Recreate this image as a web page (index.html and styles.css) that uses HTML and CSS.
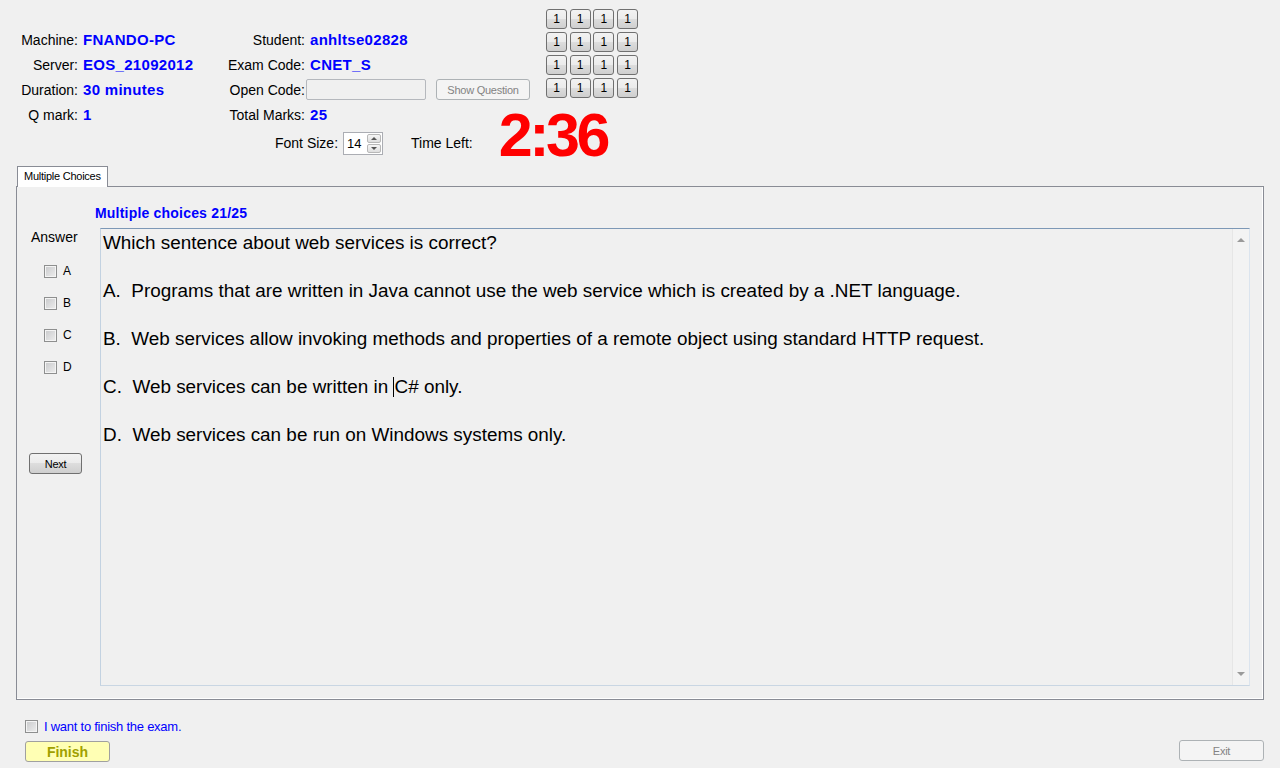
FILE: index.html
```html
<!DOCTYPE html>
<html>
<head>
<meta charset="utf-8">
<title>Exam</title>
<link rel="stylesheet" href="styles.css">
</head>
<body>
<div class="app">
  <header class="top">
    <div class="info">
      <div class="grid">
        <span class="lbl">Machine:</span><span class="val">FNANDO-PC</span>
        <span class="lbl">Student:</span><span class="val">anhltse02828</span>
        <span class="lbl">Server:</span><span class="val">EOS_21092012</span>
        <span class="lbl">Exam Code:</span><span class="val">CNET_S</span>
        <span class="lbl">Duration:</span><span class="val">30 minutes</span>
        <span class="lbl">Open Code:</span>
        <span class="open"><span class="input"></span><span class="btn disabled show">Show Question</span></span>
        <span class="lbl">Q mark:</span><span class="val">1</span>
        <span class="lbl">Total Marks:</span><span class="val">25</span>
      </div>
      <div class="fontrow">
        <span class="lbl2">Font Size:</span>
        <span class="spin">
          <span class="spinval">14</span>
          <span class="spinbtns"><span class="sb"><span class="tri up"></span></span><span class="sb"><span class="tri down"></span></span></span>
        </span>
        <span class="lbl2 timelbl">Time Left:</span>
        <span class="timer">2:36</span>
      </div>
    </div>
    <div class="qgrid">
      <span class="qb">1</span><span class="qb">1</span><span class="qb">1</span><span class="qb">1</span>
      <span class="qb">1</span><span class="qb">1</span><span class="qb">1</span><span class="qb">1</span>
      <span class="qb">1</span><span class="qb">1</span><span class="qb">1</span><span class="qb">1</span>
      <span class="qb">1</span><span class="qb">1</span><span class="qb">1</span><span class="qb">1</span>
    </div>
  </header>

  <section class="tabs">
    <div class="tabstrip"><span class="tab">Multiple Choices</span></div>
    <div class="panel">
      <div class="qtitle">Multiple choices 21/25</div>
      <div class="qbody">
        <div class="answers">
          <div class="anslbl">Answer</div>
          <label class="opt"><span class="cb"></span><span>A</span></label>
          <label class="opt"><span class="cb"></span><span>B</span></label>
          <label class="opt"><span class="cb"></span><span>C</span></label>
          <label class="opt"><span class="cb"></span><span>D</span></label>
          <span class="btn next">Next</span>
        </div>
        <div class="textbox">
          <div class="qtext">
            <p>Which sentence about web services is correct?</p>
            <p>A.  Programs that are written in Java cannot use the web service which is created by a .NET language.</p>
            <p>B.  Web services allow invoking methods and properties of a remote object using standard HTTP request.</p>
            <p>C.  Web services can be written in <span class="caret"></span>C# only.</p>
            <p>D.  Web services can be run on Windows systems only.</p>
          </div>
          <div class="vscroll">
            <span class="tri sup"></span>
            <span class="tri sdown"></span>
          </div>
        </div>
      </div>
    </div>
  </section>

  <footer class="bottom">
    <div class="finishcol">
      <label class="finishchk"><span class="cb"></span><span class="finishtxt">I want to finish the exam.</span></label>
      <span class="btn finish">Finish</span>
    </div>
    <span class="btn disabled exit">Exit</span>
  </footer>
</div>
</body>
</html>
```
FILE: styles.css
```css
* { box-sizing: border-box; }
html, body { margin: 0; padding: 0; }
body {
  width: 1280px;
  height: 768px;
  overflow: hidden;
  background: #f0f0f0;
  font-family: "Liberation Sans", Arial, sans-serif;
  font-size: 14px;
  color: #000;
}
.app { width: 1280px; height: 768px; }

/* header */
.top { display: flex; align-items: flex-start; height: 157px; }
.info { width: 530px; flex-shrink: 0; padding-top: 27px; }
.grid {
  display: grid;
  grid-template-columns: 83px 142px 85px 1fr;
  grid-auto-rows: 25px;
  align-items: center;
}
.lbl { text-align: right; padding-right: 5px; white-space: nowrap; }
.val { color: #0000ff; font-weight: bold; font-size: 15px; letter-spacing: 0.3px; white-space: nowrap; }
.open { display: flex; align-items: center; margin-left: -4px; }
.input {
  width: 120px; height: 21px;
  flex-shrink: 0;
  border: 1px solid #b5b8bd;
  border-radius: 2px;
  background: #f0f0f0;
}
.btn {
  display: inline-flex; align-items: center; justify-content: center;
  flex-shrink: 0;
  height: 21px;
  border: 1px solid #707070;
  border-radius: 3px;
  background: linear-gradient(#f2f2f2 0%, #ebebeb 50%, #dddddd 50%, #cfcfcf 100%);
  font-size: 11px;
  letter-spacing: -0.25px;
  color: #000;
}
.btn.disabled {
  border-color: #adb2b5;
  background: #f4f4f4;
  color: #838383;
}
.show { width: 94px; margin-left: 10px; }

.fontrow {
  display: flex; align-items: center;
  height: 28px; margin-top: 2px;
  padding-left: 275px;
}
.fontrow > * { flex-shrink: 0; }
.lbl2 { white-space: nowrap; }
.spin {
  display: flex; align-items: stretch;
  width: 40px; height: 23px;
  margin-left: 5px;
  border: 1px solid #abadb3;
  background: #fff;
}
.spinval { flex: 1; font-size: 13px; padding-left: 3px; line-height: 21px; }
.spinbtns { width: 16px; display: flex; flex-direction: column; padding: 1px; gap: 1px; }
.sb {
  flex: 1;
  display: flex; align-items: center; justify-content: center;
  border: 1px solid #b8b8b8; border-radius: 2px;
  background: linear-gradient(#f6f6f6, #dedede);
}
.tri { width: 0; height: 0; display: block; }
.tri.up { border-left: 3px solid transparent; border-right: 3px solid transparent; border-bottom: 3px solid #555; }
.tri.down { border-left: 3px solid transparent; border-right: 3px solid transparent; border-top: 3px solid #555; }
.timelbl { margin-left: 28px; }
.timer {
  margin-left: 26px;
  margin-top: -16px;
  font-size: 61px;
  line-height: 44px;
  font-weight: bold;
  color: #ff0000;
  letter-spacing: -3.5px;
}

.qgrid {
  margin-top: 9px;
  margin-left: 16px;
  display: grid;
  grid-template-columns: repeat(4, 21px);
  grid-auto-rows: 20px;
  column-gap: 2.7px;
  row-gap: 3px;
}
.qb {
  display: flex; align-items: center; justify-content: center;
  border: 1px solid #707070;
  border-radius: 3px;
  background: linear-gradient(#f2f2f2 0%, #ebebeb 50%, #dddddd 50%, #cfcfcf 100%);
  font-size: 12px;
}

/* tabs */
.tabs { margin: 9px 16px 0 16px; }
.tabstrip { display: flex; padding-left: 1px; height: 20px; }
.tab {
  position: relative; z-index: 1;
  height: 21px;
  padding: 3px 6px 0 6px;
  border: 1px solid #898c95;
  border-bottom: none;
  background: #ffffff;
  font-size: 11px;
  letter-spacing: -0.25px;
}
.panel {
  height: 514px;
  border: 1px solid #898c95;
  box-shadow: inset -1px -1px 0 #ffffff;
  padding: 19px 13px 0 0;
}
.qtitle {
  padding-left: 78px;
  height: 15px; line-height: 15px;
  margin-bottom: 7px;
  color: #0000ff;
  font-weight: bold;
  font-size: 14px;
  letter-spacing: 0.2px;
}
.qbody { display: flex; }
.answers { width: 83px; flex-shrink: 0; display: flex; flex-direction: column; align-items: flex-start; }
.anslbl { margin: 2px 0 10px 14px; height: 15px; line-height: 15px; }
.opt {
  display: flex; align-items: center; gap: 6px;
  height: 32px;
  margin-left: 27px;
  font-size: 12px;
}
.cb {
  display: inline-block;
  flex-shrink: 0;
  width: 13px; height: 13px;
  border: 1px solid #8e8f8f;
  background: linear-gradient(135deg, #c8c9cb, #eeeeee);
  box-shadow: inset 0 0 0 1px #f4f4f4;
}
.next { width: 53px; margin: 70px 0 0 12px; }

.textbox {
  flex: 1;
  height: 458px;
  display: flex;
  border-top: 1px solid #7d98b6;
  border-left: 1px solid #c3d2e1;
  border-right: 1px solid #dbe4ee;
  border-bottom: 1px solid #c9d6e3;
  background: #f0f0f0;
}
.qtext { flex: 1; padding: 2px 0 0 2px; font-size: 18.9px; }
.qtext p { margin: 0 0 24px 0; line-height: 24px; white-space: pre; }
.caret { display: inline-block; width: 0; height: 20px; border-left: 1px solid #000; vertical-align: -4px; }
.vscroll {
  width: 17px;
  display: flex; flex-direction: column; justify-content: space-between; align-items: center;
  padding: 9px 0 9px 0;
  background: #f3f3f3;
  border-left: 1px solid #e6e6e6;
}
.tri.sup { border-left: 4px solid transparent; border-right: 4px solid transparent; border-bottom: 4px solid #9a9a9a; }
.tri.sdown { border-left: 4px solid transparent; border-right: 4px solid transparent; border-top: 4px solid #9a9a9a; }

/* footer */
.bottom {
  display: flex; justify-content: space-between; align-items: flex-end;
  padding: 0 16px 0 25px;
  margin-top: 19px;
}
.finishcol { display: flex; flex-direction: column; align-items: flex-start; }
.finishchk { display: flex; align-items: center; gap: 6px; height: 15px; }
.finishtxt { color: #0000ff; font-size: 13px; letter-spacing: -0.25px; }
.finish {
  margin-top: 7px;
  width: 85px;
  border-color: #a0a0a0;
  background: #ffffb4;
  color: #a0a000;
  font-weight: bold;
  font-size: 14px;
  letter-spacing: 0;
}
.exit { width: 85px; margin-bottom: 1px; }
```
